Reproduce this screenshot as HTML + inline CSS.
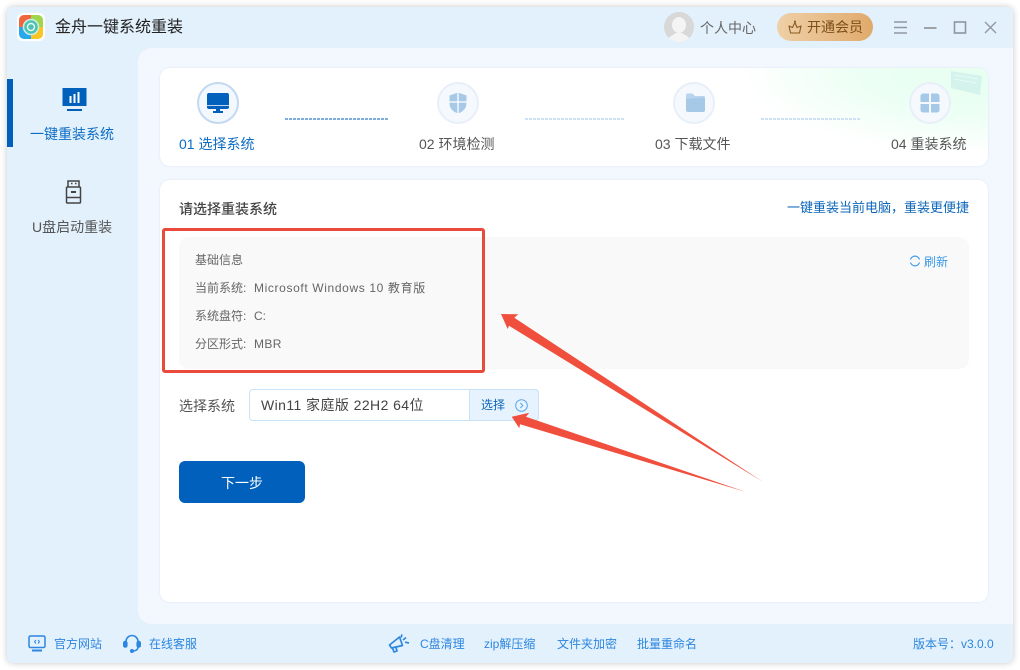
<!DOCTYPE html>
<html lang="zh">
<head>
<meta charset="utf-8">
<title>金舟一键系统重装</title>
<style>
html,body{margin:0;padding:0;width:1020px;height:670px;overflow:hidden;background:#fff;}
*{box-sizing:border-box;}
body{font-family:"Liberation Sans","Noto Sans CJK SC",sans-serif;position:relative;}
.t{position:absolute;white-space:nowrap;line-height:1;}
.a{position:absolute;}
</style>
</head>
<body>
<div class="a" style="left:7px;top:7px;width:1006px;height:656px;background:#e3f1fc;border-radius:6px;box-shadow:0 0 7px rgba(0,0,0,.22);"></div>
<div class="a" style="left:138px;top:48px;width:875px;height:576px;background:#f3f8ff;border-radius:14px 0 0 14px;"></div>

<!-- logo -->
<div class="a" style="left:17px;top:13px;width:28px;height:28px;background:#fff;border-radius:6px;"></div>
<svg class="a" style="left:19px;top:15px" width="24" height="24" viewBox="0 0 24 24">
<defs><clipPath id="c"><rect width="24" height="24" rx="5"/></clipPath></defs>
<g clip-path="url(#c)"><rect width="12" height="12" fill="#f0673f"/><rect x="12" width="12" height="12" fill="#9ed74c"/><rect y="12" width="12" height="12" fill="#29a9ec"/><rect x="12" y="12" width="12" height="12" fill="#fbc425"/></g>
<circle cx="12" cy="12" r="7.5" fill="#4fc2b0" stroke="#cdeee6" stroke-width="1.5"/>
<circle cx="12" cy="12" r="3.5" fill="none" stroke="#e8fbf6" stroke-width="1.4"/>
</svg>
<div class="t" style="left:55px;top:20px;font-size:16px;color:#222;">金舟一键系统重装</div>

<!-- top right -->
<svg class="a" style="left:664px;top:12px" width="30" height="30" viewBox="0 0 30 30">
<defs><clipPath id="av"><circle cx="15" cy="15" r="15"/></clipPath></defs>
<circle cx="15" cy="15" r="15" fill="#d8d8d8"/>
<g clip-path="url(#av)"><ellipse cx="15" cy="13" rx="7" ry="8" fill="#f4f4f4"/><path d="M3 30c1-6 7-7 9-9h6c2 2 8 3 9 9z" fill="#f4f4f4"/></g>
</svg>
<div class="t" style="left:700px;top:21px;font-size:14px;color:#666;">个人中心</div>
<div class="a" style="left:777px;top:13px;width:96px;height:28px;border-radius:14px;background:linear-gradient(90deg,#efd0a8,#e0aa6c);"></div>
<svg class="a" style="left:787px;top:19px" width="16" height="16" viewBox="0 0 16 16" fill="none" stroke="#8a5a20" stroke-width="1.1" stroke-linejoin="round"><path d="M2 7l3.5 1.5L8 3.5l2 5L14 7l-1.5 7h-9z"/><circle cx="8" cy="2.5" r=".5"/></svg>
<div class="t" style="left:807px;top:20px;font-size:14px;color:#7b4f18;">开通会员</div>
<svg class="a" style="left:890px;top:16px" width="110" height="24" viewBox="0 0 110 24" fill="none" stroke="#8e979f" stroke-width="1.3">
<path d="M4 6h13M4 11.5h13M4 17h13" stroke-width="1.4"/>
<path d="M34 12h12.5" stroke="#777"/>
<rect x="64.5" y="6" width="11" height="11" stroke-width="1.6"/>
<path d="M95 6l11 11M106 6l-11 11"/>
</svg>

<!-- sidebar -->
<div class="a" style="left:7px;top:79px;width:6px;height:68px;background:#0060bc;"></div>
<svg class="a" style="left:62px;top:88px" width="25" height="24" viewBox="0 0 25 24">
<rect width="24" height="18" x=".5" fill="#0060bc"/><rect x="5" y="21" width="15" height="2" fill="#0060bc"/>
<path d="M7.5 8v7h2V8zM11.5 6v9h2V6zM15.5 4v11h2V4z" fill="#fff"/>
</svg>
<div class="t" style="left:30px;top:127px;font-size:14px;color:#0d6cc4;">一键重装系统</div>
<svg class="a" style="left:64px;top:179px" width="20" height="26" viewBox="0 0 20 26" fill="none" stroke="#444" stroke-width="1.5">
<path d="M4 8V2h11v6"/><path d="M7 4.5h1.5M11 4.5h1.5" />
<rect x="2.5" y="8" width="14" height="16" rx="1"/><path d="M2.5 18.5h14"/><path d="M7 13h5" stroke-width="2"/>
</svg>
<div class="t" style="left:32px;top:220px;font-size:14px;color:#555;">U盘启动重装</div>

<!-- steps card -->
<div class="a" style="left:160px;top:68px;width:828px;height:98px;background:#fff;border-radius:10px;box-shadow:0 0 2px rgba(120,150,190,.2);overflow:hidden;">
<div class="a" style="left:500px;top:0;width:328px;height:98px;background:radial-gradient(ellipse 250px 82px at 100% 5%,#e6fff0 0%,#ecfff4 50%,rgba(255,255,255,0) 100%);"></div>
<svg class="a" style="left:788px;top:0" width="38" height="32" viewBox="0 0 38 32"><path d="M3 3l31 5-2 19-29-7z" fill="#d4f3ec"/><path d="M6 7l24 4M6 11l22 4" stroke="#e8faf5" stroke-width="1" fill="none"/></svg>
</div>
<!-- step icons -->
<div class="a" style="left:197px;top:82px;width:42px;height:42px;border-radius:50%;background:#f3f8fe;border:2px solid #c4d8f0;"></div>
<svg class="a" style="left:207px;top:93px" width="22" height="21" viewBox="0 0 22 21"><path d="M2 0h18a2 2 0 012 2v12a2 2 0 01-2 2H2a2 2 0 01-2-2V2a2 2 0 012-2z" fill="#0060bc"/><path d="M0 12.5h22" stroke="#fff" stroke-width=".8"/><path d="M9 16h4v2h3v2H6v-2h3z" fill="#0060bc"/></svg>
<div class="t" style="left:179px;top:137px;font-size:14px;color:#0d6cc4;">01 选择系统</div>

<div class="a" style="left:437px;top:82px;width:42px;height:42px;border-radius:50%;background:#f5f9fe;border:2px solid #e8eff9;"></div>
<svg class="a" style="left:449px;top:92px" width="18" height="22" viewBox="0 0 18 22"><path d="M9 .5l8.5 3v8c0 5-4 8.500-8.500 10C4.500 20 .5 16.500.5 11.500v-8z" fill="#a6c9e8"/><path d="M9 .5v21M.5 10h17" stroke="#fff" stroke-width="1.300"/></svg>
<div class="t" style="left:419px;top:137px;font-size:14px;color:#555;">02 环境检测</div>

<div class="a" style="left:673px;top:82px;width:42px;height:42px;border-radius:50%;background:#f5f9fe;border:2px solid #e8eff9;"></div>
<svg class="a" style="left:686px;top:93px" width="19" height="20" viewBox="0 0 19 20"><path d="M0 2a1.500 1.500 0 011.500-1.500h5L9 3h8.500A1.500 1.500 0 0119 4.500V7H0z" fill="#b9d4ee"/><path d="M0 6l17-1.500a2 2 0 012 2V17a2 2 0 01-2 2H2a2 2 0 01-2-2z" fill="#a6c9e8"/></svg>
<div class="t" style="left:655px;top:137px;font-size:14px;color:#555;">03 下载文件</div>

<div class="a" style="left:909px;top:82px;width:42px;height:42px;border-radius:50%;background:#f5f9fe;border:2px solid #e8eff9;"></div>
<svg class="a" style="left:920px;top:93px" width="20" height="20" viewBox="0 0 20 20" fill="#a6c9e8"><path d="M3 .5h6v8.500H.5V3A2.500 2.500 0 013 .5z"/><path d="M11 .5h6A2.500 2.500 0 0119.500 3v6H11z"/><path d="M.5 11H9v8.500H3A2.500 2.500 0 01.5 17z"/><path d="M11 11h8.500v6a2.500 2.500 0 01-2.500 2.500h-6z"/></svg>
<div class="t" style="left:891px;top:137px;font-size:14px;color:#555;">04 重装系统</div>

<!-- connectors -->
<div class="a" style="left:285px;top:118px;width:104px;height:2px;background:repeating-linear-gradient(90deg,#7daedd 0,#7daedd 3px,transparent 3px,transparent 4px);"></div>
<div class="a" style="left:525px;top:118px;width:100px;height:2px;background:repeating-linear-gradient(90deg,#cfe2f5 0,#cfe2f5 3px,transparent 3px,transparent 4px);"></div>
<div class="a" style="left:761px;top:118px;width:100px;height:2px;background:repeating-linear-gradient(90deg,#cfe2f5 0,#cfe2f5 3px,transparent 3px,transparent 4px);"></div>

<!-- main card -->
<div class="a" style="left:160px;top:180px;width:828px;height:422px;background:#fff;border-radius:10px;box-shadow:0 0 2px rgba(120,150,190,.2);"></div>
<div class="t" style="left:179px;top:202px;font-size:14px;color:#444;font-weight:500;">请选择重装系统</div>
<div class="t" style="left:787px;top:201px;font-size:13px;color:#0d66b8;">一键重装当前电脑，重装更便捷</div>

<div class="a" style="left:179px;top:237px;width:790px;height:132px;background:#f9f9f9;border-radius:10px;"></div>
<div class="t" style="left:195px;top:254px;font-size:12px;color:#666;">基础信息</div>
<div class="t" style="left:195px;top:282px;font-size:12px;color:#666;">当前系统:</div>
<div class="t" style="left:254px;top:282px;font-size:12px;color:#666;letter-spacing:.63px;">Microsoft Windows 10 教育版</div>
<div class="t" style="left:195px;top:310px;font-size:12px;color:#666;">系统盘符:</div>
<div class="t" style="left:254px;top:310px;font-size:12px;color:#666;">C:</div>
<div class="t" style="left:195px;top:338px;font-size:12px;color:#666;">分区形式:</div>
<div class="t" style="left:254px;top:338px;font-size:12px;color:#666;letter-spacing:.4px;">MBR</div>

<svg class="a" style="left:909px;top:255px" width="12" height="12" viewBox="0 0 12 12" fill="none" stroke="#3a98e8" stroke-width="1.200"><path d="M1.500 4.500A4.700 4.700 0 0110.500 4.500M10.500 7.500A4.700 4.700 0 011.500 7.500"/></svg>
<div class="t" style="left:924px;top:256px;font-size:12px;color:#3a98e8;">刷新</div>

<!-- select -->
<div class="t" style="left:179px;top:399px;font-size:14px;color:#555;">选择系统</div>
<div class="a" style="left:249px;top:389px;width:290px;height:32px;background:#fff;border:1px solid #c8e2f8;border-radius:4px;"></div>
<div class="a" style="left:469px;top:389px;width:70px;height:32px;background:#e6f2fe;border:1px solid #c8e2f8;border-radius:0 4px 4px 0;"></div>
<div class="t" style="left:261px;top:398px;font-size:14px;color:#444;letter-spacing:.42px;">Win11 家庭版 22H2 64位</div>
<div class="t" style="left:481px;top:399px;font-size:12px;color:#0d66b8;">选择</div>
<svg class="a" style="left:515px;top:399px" width="13" height="13" viewBox="0 0 13 13" fill="none" stroke="#5ba7e6" stroke-width="1"><circle cx="6.500" cy="6.500" r="5.800"/><path d="M5.300 4l2.500 2.500L5.300 9"/></svg>

<!-- button -->
<div class="a" style="left:179px;top:461px;width:126px;height:42px;background:#0060bc;border-radius:6px;"></div>
<div class="t" style="left:221px;top:476px;font-size:14px;color:#fff;">下一步</div>

<!-- red annotations -->
<div class="a" style="left:162px;top:228px;width:323px;height:145px;border:3px solid #ea4a3b;border-radius:3px;"></div>
<svg class="a" style="left:0;top:0;pointer-events:none" width="1020" height="670" viewBox="0 0 1020 670">
<path d="M501 314L518.300 314.300L514.300 317.700L763 482L509 325.700L507.700 329Z" fill="#f04f3e"/>
<path d="M511.700 416.700L529.300 412.700L526 416.700L746 492L520 424.300L519.300 428.300Z" fill="#f04f3e"/>
</svg>

<!-- footer -->
<svg class="a" style="left:28px;top:635px" width="18" height="17" viewBox="0 0 18 17" fill="none" stroke="#2d86e0">
<rect x="1" y="1" width="16" height="11.500" rx="1.500" stroke-width="1.500"/><path d="M4 15.500h10" stroke-width="2"/><path d="M8 5L6.500 6.700 8 8.500M10 5l1.500 1.700L10 8.500" stroke-width="1"/>
</svg>
<div class="t" style="left:54px;top:638px;font-size:12px;color:#2d86e0;">官方网站</div>
<svg class="a" style="left:123px;top:634px" width="18" height="19" viewBox="0 0 18 19" fill="none" stroke="#2d86e0" stroke-width="1.600">
<path d="M3 9V7.500a6 6 0 0112 0V9"/><rect x=".8" y="7.500" width="3" height="5.500" rx="1.400" fill="#2d86e0"/><rect x="14.200" y="7.500" width="3" height="5.500" rx="1.400" fill="#2d86e0"/><path d="M15 13c0 3-3 4-5 4"/><circle cx="9" cy="17" r="1.200" fill="#2d86e0"/>
</svg>
<div class="t" style="left:149px;top:638px;font-size:12px;color:#2d86e0;">在线客服</div>
<svg class="a" style="left:388px;top:633px" width="22" height="21" viewBox="0 0 22 21" fill="none" stroke="#2d86e0" stroke-width="1.700" stroke-linejoin="round">
<path d="M1.500 12l10-8 3 8.500-11 2.500z"/><path d="M4.500 15l1.500 4 3-1-1-3.500"/><path d="M14 1.500l-1 3M18 4.500l-3 2.500M21 10l-4-.8"/>
</svg>
<div class="t" style="left:420px;top:638px;font-size:12px;color:#2d86e0;">C盘清理</div>
<div class="t" style="left:484px;top:638px;font-size:12px;color:#2d86e0;">zip解压缩</div>
<div class="t" style="left:557px;top:638px;font-size:12px;color:#2d86e0;">文件夹加密</div>
<div class="t" style="left:637px;top:638px;font-size:12px;color:#2d86e0;">批量重命名</div>
<div class="t" style="left:913px;top:638px;font-size:12px;color:#2d86e0;">版本号：v3.0.0</div>
</body>
</html>
